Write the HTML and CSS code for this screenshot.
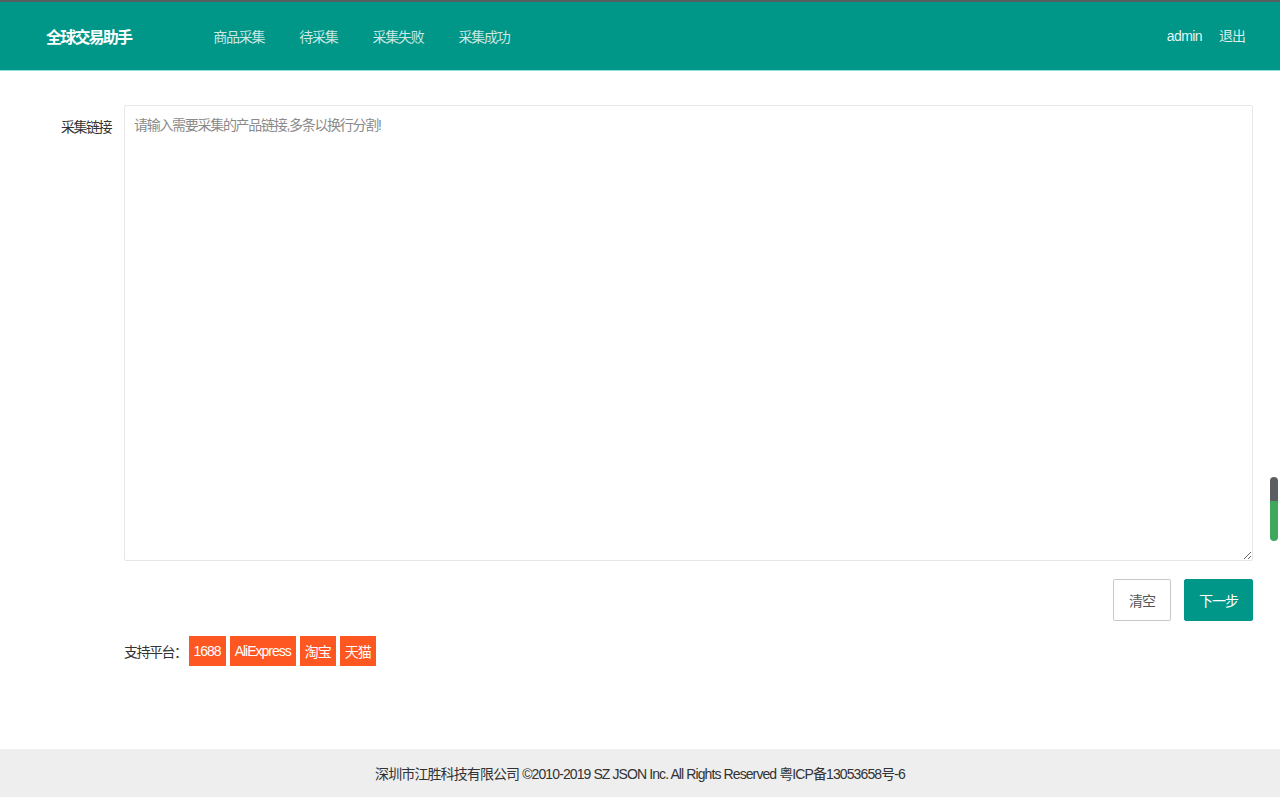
FILE: index.html
```html
<!DOCTYPE html>
<html lang="zh-CN">
<head>
<meta charset="utf-8">
<title>全球交易助手</title>
<link rel="stylesheet" href="styles.css">
</head>
<body>
<header class="header">
  <div class="logo">全球交易助手</div>
  <nav class="nav">
    <a class="nav-item">商品采集</a>
    <a class="nav-item">待采集</a>
    <a class="nav-item">采集失败</a>
    <a class="nav-item">采集成功</a>
  </nav>
  <div class="user">
    <a class="user-name">admin</a>
    <a class="user-item">退出</a>
  </div>
</header>

<main class="main">
  <div class="form-row">
    <label class="form-label">采集链接</label>
    <textarea class="links" placeholder="请输入需要采集的产品链接,多条以换行分割!"></textarea>
  </div>
  <div class="actions">
    <button class="btn btn-plain">清空</button>
    <button class="btn btn-primary">下一步</button>
  </div>
  <div class="platforms">
    <span class="platforms-label">支持平台：</span>
    <span class="tag">1688</span>
    <span class="tag">AliExpress</span>
    <span class="tag">淘宝</span>
    <span class="tag">天猫</span>
  </div>
</main>

<footer class="footer">深圳市江胜科技有限公司 ©2010-2019 SZ JSON Inc. All Rights Reserved 粤ICP备13053658号-6</footer>

<div class="scroll-indicator"><span class="scroll-top"></span><span class="scroll-bottom"></span></div>
</body>
</html>
```

FILE: styles.css
```css
* { box-sizing: border-box; }

html, body {
  margin: 0;
  padding: 0;
  background: #fff;
}

body {
  font-family: "Liberation Sans", "Noto Sans CJK SC", sans-serif;
  font-size: 14px;
  color: #333;
  letter-spacing: -1px;
}

.header {
  display: flex;
  align-items: center;
  height: 71px;
  background: #009688;
  border-top: 2px solid #566060;
  border-bottom: 1px solid #8fe0d6;
  padding: 0 35px 0 46px;
}

.logo {
  color: #fff;
  font-size: 16px;
  font-weight: bold;
  letter-spacing: -1.8px;
}

.nav {
  display: flex;
  gap: 35px;
  margin-left: 82px;
}

.nav-item {
  color: rgba(255, 255, 255, 0.8);
  font-size: 14px;
  letter-spacing: -1.25px;
  cursor: pointer;
}

.user {
  margin-left: auto;
  display: flex;
  align-items: center;
  gap: 17px;
}

.user-name {
  color: rgba(255, 255, 255, 0.92);
  letter-spacing: -0.6px;
  line-height: 20px;
}

.user-item {
  color: rgba(255, 255, 255, 0.85);
  letter-spacing: -1px;
  line-height: 20px;
}

.main {
  padding: 34px 27px 0 0;
}

.form-row {
  display: flex;
  align-items: flex-start;
}

.form-label {
  width: 124px;
  padding: 12px 13px 0 0;
  text-align: right;
  font-size: 14px;
  letter-spacing: -1.5px;
  color: #333;
  line-height: 20px;
}

.links {
  flex: 1;
  height: 456px;
  border: 1px solid #e6e6e6;
  border-radius: 2px;
  padding: 9px 9px;
  font-family: "Liberation Sans", "Noto Sans CJK SC", sans-serif;
  font-size: 14px;
  letter-spacing: -1.3px;
  line-height: 20px;
  color: #333;
  outline: none;
  resize: vertical;
}

.links::placeholder {
  color: #8a8a8a;
}

.actions {
  display: flex;
  justify-content: flex-end;
  gap: 13px;
  margin-top: 18px;
}

.btn {
  height: 42px;
  border-radius: 2px;
  font-family: "Liberation Sans", "Noto Sans CJK SC", sans-serif;
  font-size: 14px;
  letter-spacing: -1px;
  cursor: pointer;
}

.btn-plain {
  width: 58px;
  background: #fff;
  border: 1px solid #c9c9c9;
  color: #555;
}

.btn-primary {
  width: 69px;
  background: #009688;
  border: 1px solid #009688;
  color: #fff;
}

.platforms {
  display: flex;
  align-items: center;
  gap: 4px;
  margin-top: 15px;
  padding-left: 124px;
}

.platforms-label {
  letter-spacing: -1.5px;
  margin-right: -2px;
}

.tag {
  display: inline-flex;
  align-items: center;
  height: 30px;
  padding: 0 5px;
  background: #ff5722;
  color: #fff;
  letter-spacing: -1px;
}

.footer {
  margin-top: 83px;
  height: 48px;
  line-height: 50px;
  background: #eeeeee;
  text-align: center;
  color: #333;
  font-size: 14px;
  letter-spacing: -0.9px;
}

.scroll-indicator {
  position: fixed;
  left: 1270px;
  top: 477px;
  width: 8px;
  height: 64px;
  border-radius: 4px;
  overflow: hidden;
  display: flex;
  flex-direction: column;
}

.scroll-top {
  height: 24px;
  background: #5b5f62;
}

.scroll-bottom {
  flex: 1;
  background: #3fa85c;
}
```
